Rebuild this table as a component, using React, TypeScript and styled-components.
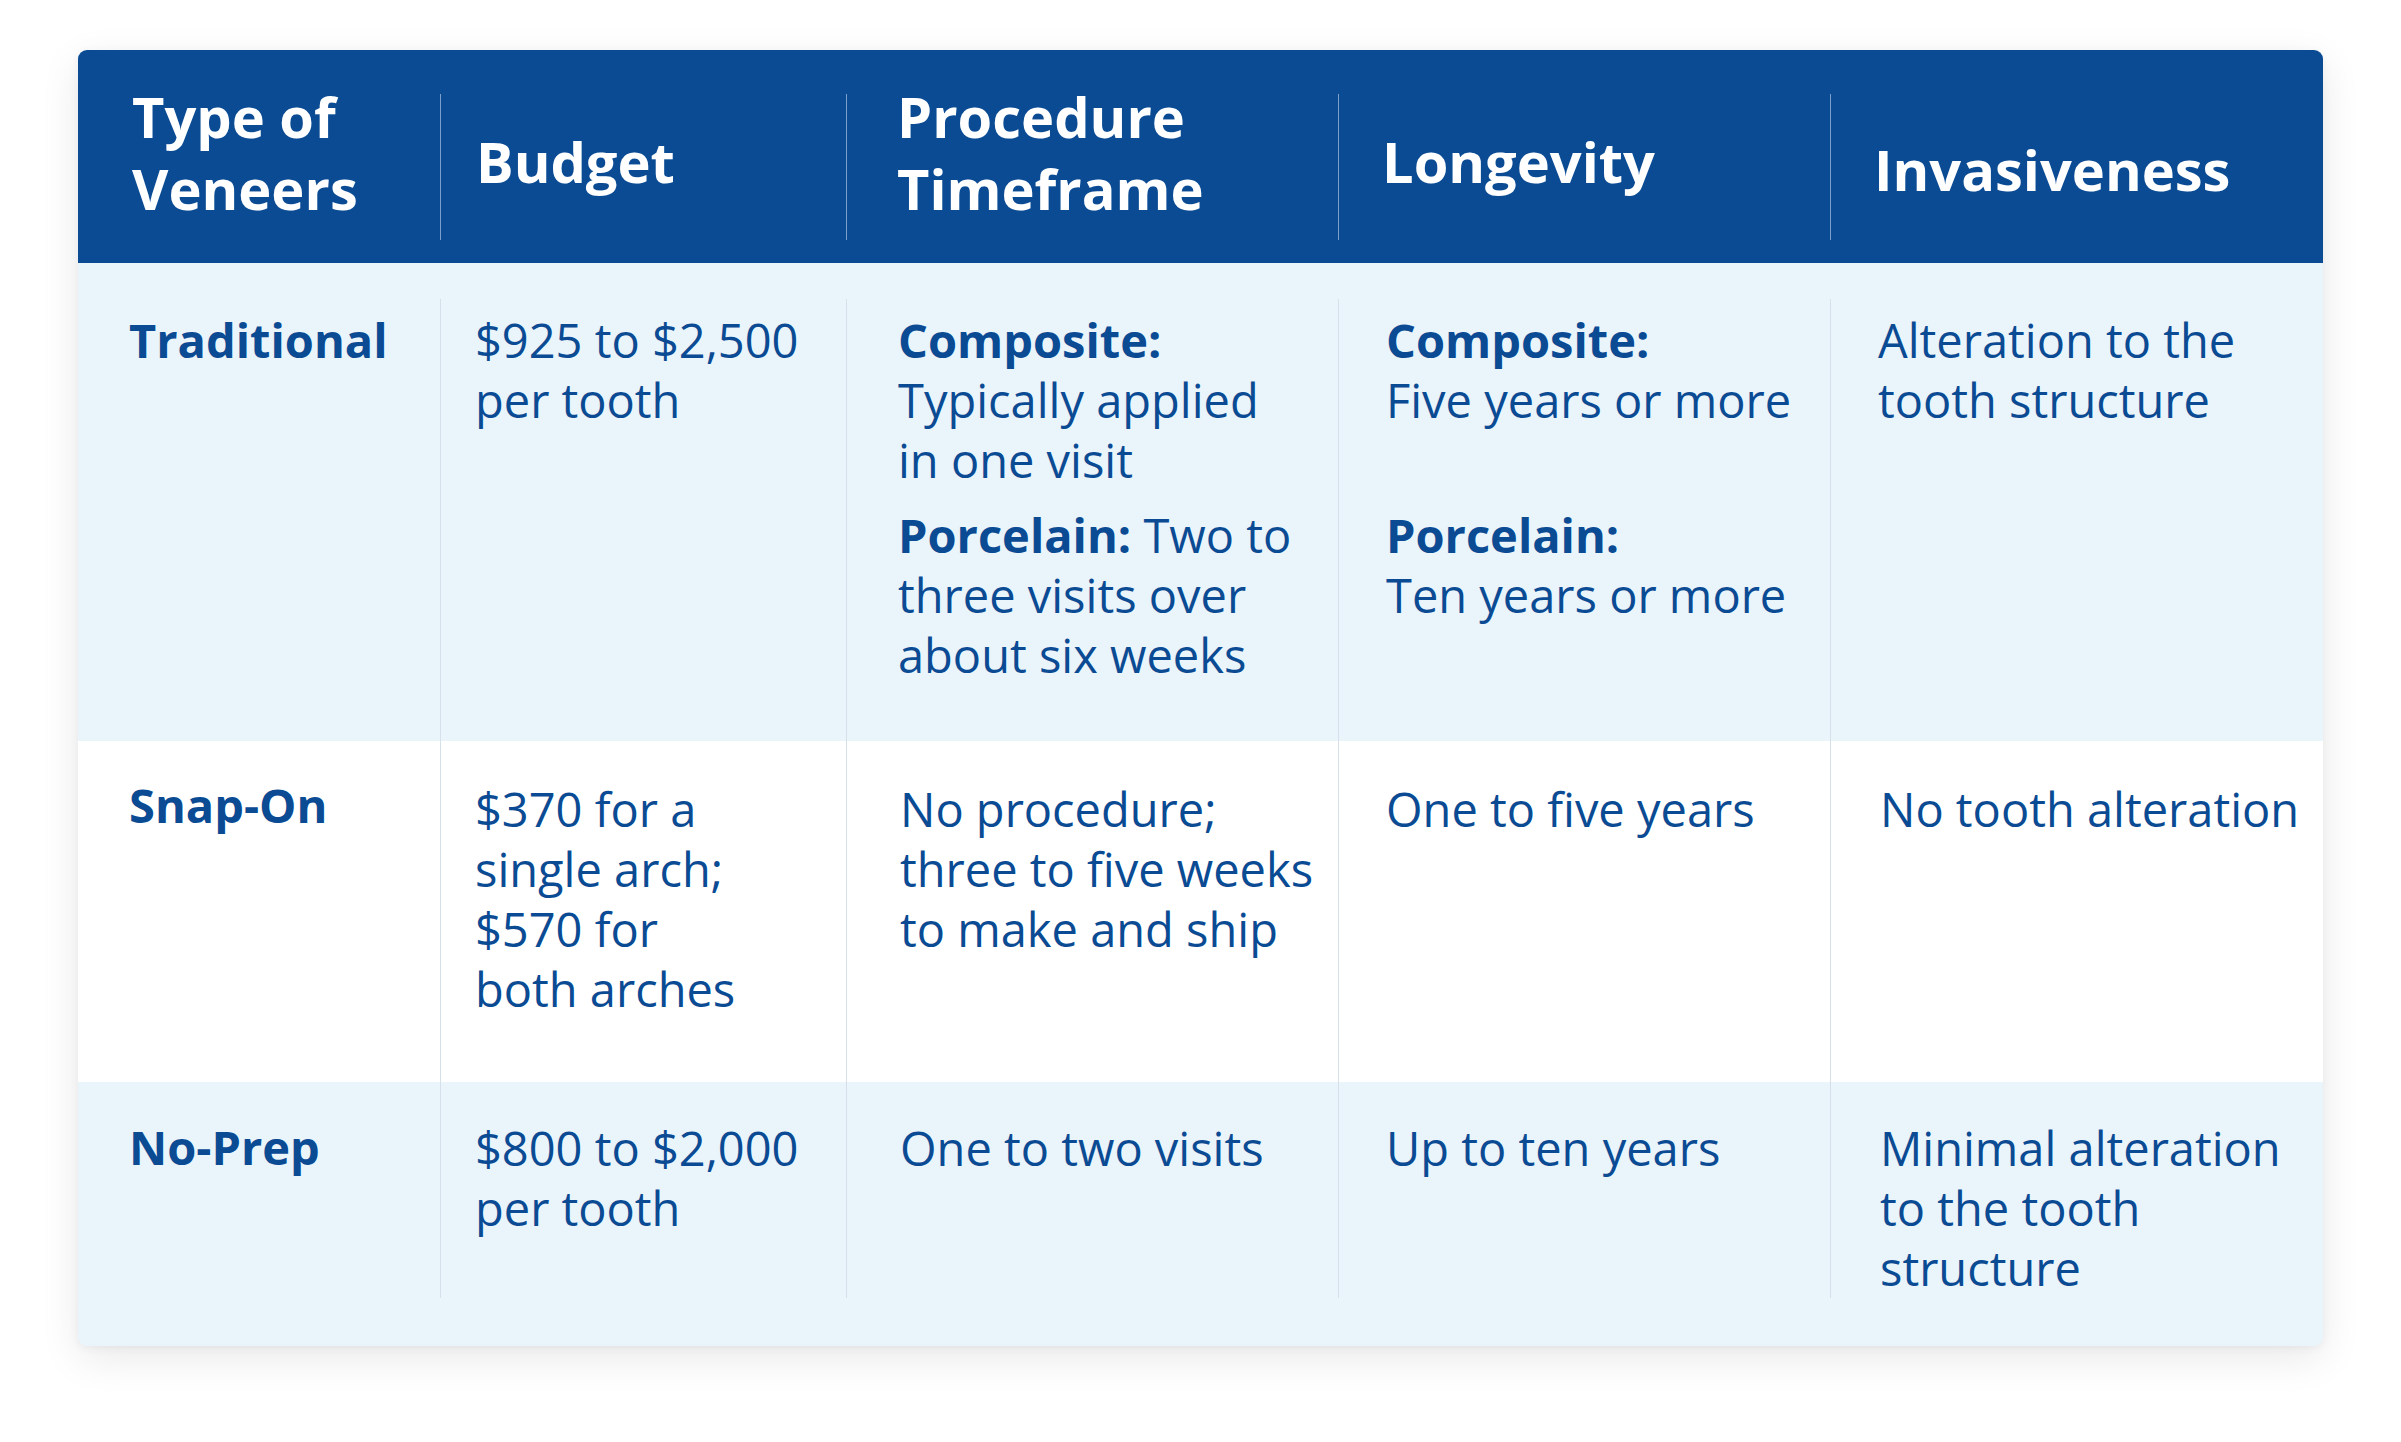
import React from "react"
import styled, { createGlobalStyle } from "styled-components"

const GlobalStyle = createGlobalStyle`
    html, body {
        margin: 0;
        padding: 0;
        background: #ffffff;
    }
    body {
        font-family: "Open Sans", "Noto Sans", "Liberation Sans", sans-serif;
    }
`

const COLS = "362px 406px 492px 492px 493px"

const Page = styled.div`
    padding: 50px 0 96px 78px;
`

const Card = styled.div`
    width: 2245px;
    border-radius: 9px;
    overflow: hidden;
    background: #eaf4fb;
    box-shadow: 0 12px 40px rgba(0, 0, 0, 0.09), 0 2px 10px rgba(0, 0, 0, 0.05);
`

const HeadRow = styled.div`
    display: grid;
    grid-template-columns: ${COLS};
    height: 213px;
    background: #0a4b94;
`

// the divider is drawn short of the header's top and bottom edges
const HeadCell = styled.div<{ $pad: number; $top: number; $first?: boolean }>`
    position: relative;
    padding: ${(p) => p.$top}px 10px 0 ${(p) => p.$pad}px;
    color: #ffffff;
    font-size: 56px;
    font-weight: 700;
    line-height: 72px;

    &::before {
        content: "";
        display: ${(p) => (p.$first ? "none" : "block")};
        position: absolute;
        left: 0;
        top: 44px;
        bottom: 23px;
        width: 1px;
        background: #7d9fcb;
    }
`

const BodyRow = styled.div<{ $shade?: boolean; $top?: number; $bottom?: number }>`
    display: grid;
    grid-template-columns: ${COLS};
    background: ${(p) => (p.$shade ? "#eaf4fb" : "#ffffff")};
    padding-top: ${(p) => p.$top ?? 0}px;
    padding-bottom: ${(p) => p.$bottom ?? 0}px;
`

const Cell = styled.div<{ $pad: number; $first?: boolean; $top: number; $bottom: number }>`
    padding: ${(p) => p.$top}px 10px ${(p) => p.$bottom}px ${(p) => p.$pad}px;
    border-left: ${(p) => (p.$first ? "none" : "1px solid #d6e0ea")};
    color: #0a4b94;
    font-size: 47px;
    line-height: 60px;
`

const Label = styled.div<{ $lift?: number }>`
    font-weight: 700;
    margin-top: ${(p) => -(p.$lift ?? 0)}px;
`

const Para = styled.p<{ $after?: number }>`
    margin: 0 0 ${(p) => p.$after ?? 0}px;
`

const Strong = styled.span`
    font-weight: 700;
`

const headers = [
    { text: <>Type of<br />Veneers</>, pad: 54, top: 30 },
    { text: <>Budget</>, pad: 36, top: 75 },
    { text: <>Procedure<br />Timeframe</>, pad: 51, top: 30 },
    { text: <>Longevity</>, pad: 44, top: 75 },
    { text: <>Invasiveness</>, pad: 44, top: 83 },
]

const bodyPad = [51, 34, 51, 47, 47]

type RowData = {
    shade: boolean
    top?: number
    bottom?: number
    cellTop: number
    cellBottom: number
    cells: React.ReactNode[]
}

const rows: RowData[] = [
    {
        shade: true,
        top: 36,
        cellTop: 11,
        cellBottom: 56,
        cells: [
            <Label>Traditional</Label>,
            <>$925 to $2,500<br />per tooth</>,
            <>
                <Para $after={15}><Strong>Composite:</Strong><br />Typically applied<br />in one visit</Para>
                <Para><Strong>Porcelain:</Strong> Two to<br />three visits over<br />about six weeks</Para>
            </>,
            <>
                <Para $after={75}><Strong>Composite:</Strong><br />Five years or more</Para>
                <Para><Strong>Porcelain:</Strong><br />Ten years or more</Para>
            </>,
            <>Alteration to the<br />tooth structure</>,
        ],
    },
    {
        shade: false,
        cellTop: 38,
        cellBottom: 63,
        cells: [
            <Label $lift={4}>Snap-On</Label>,
            <>$370 for a<br />single arch;<br />$570 for<br />both arches</>,
            <>No procedure;<br />three to five weeks<br />to make and ship</>,
            <>One to five years</>,
            <>No tooth alteration</>,
        ],
    },
    {
        shade: true,
        bottom: 48,
        cellTop: 36,
        cellBottom: 0,
        cells: [
            <Label $lift={1}>No-Prep</Label>,
            <>$800 to $2,000<br />per tooth</>,
            <>One to two visits</>,
            <>Up to ten years</>,
            <>Minimal alteration<br />to the tooth<br />structure</>,
        ],
    },
]

const App: React.FC = () => {
    return (
        <>
            <GlobalStyle />
            <Page>
                <Card>
                    <HeadRow>
                        {headers.map((h, i) => (
                            <HeadCell key={i} $pad={h.pad} $top={h.top} $first={i === 0}>
                                {h.text}
                            </HeadCell>
                        ))}
                    </HeadRow>
                    {rows.map((r, ri) => (
                        <BodyRow key={ri} $shade={r.shade} $top={r.top} $bottom={r.bottom}>
                            {r.cells.map((c, ci) => (
                                <Cell
                                    key={ci}
                                    $pad={bodyPad[ci] + (ri > 0 && (ci === 2 || ci === 4) ? 2 : 0)}
                                    $first={ci === 0}
                                    $top={r.cellTop}
                                    $bottom={r.cellBottom}
                                >
                                    {c}
                                </Cell>
                            ))}
                        </BodyRow>
                    ))}
                </Card>
            </Page>
        </>
    )
}

export default App
